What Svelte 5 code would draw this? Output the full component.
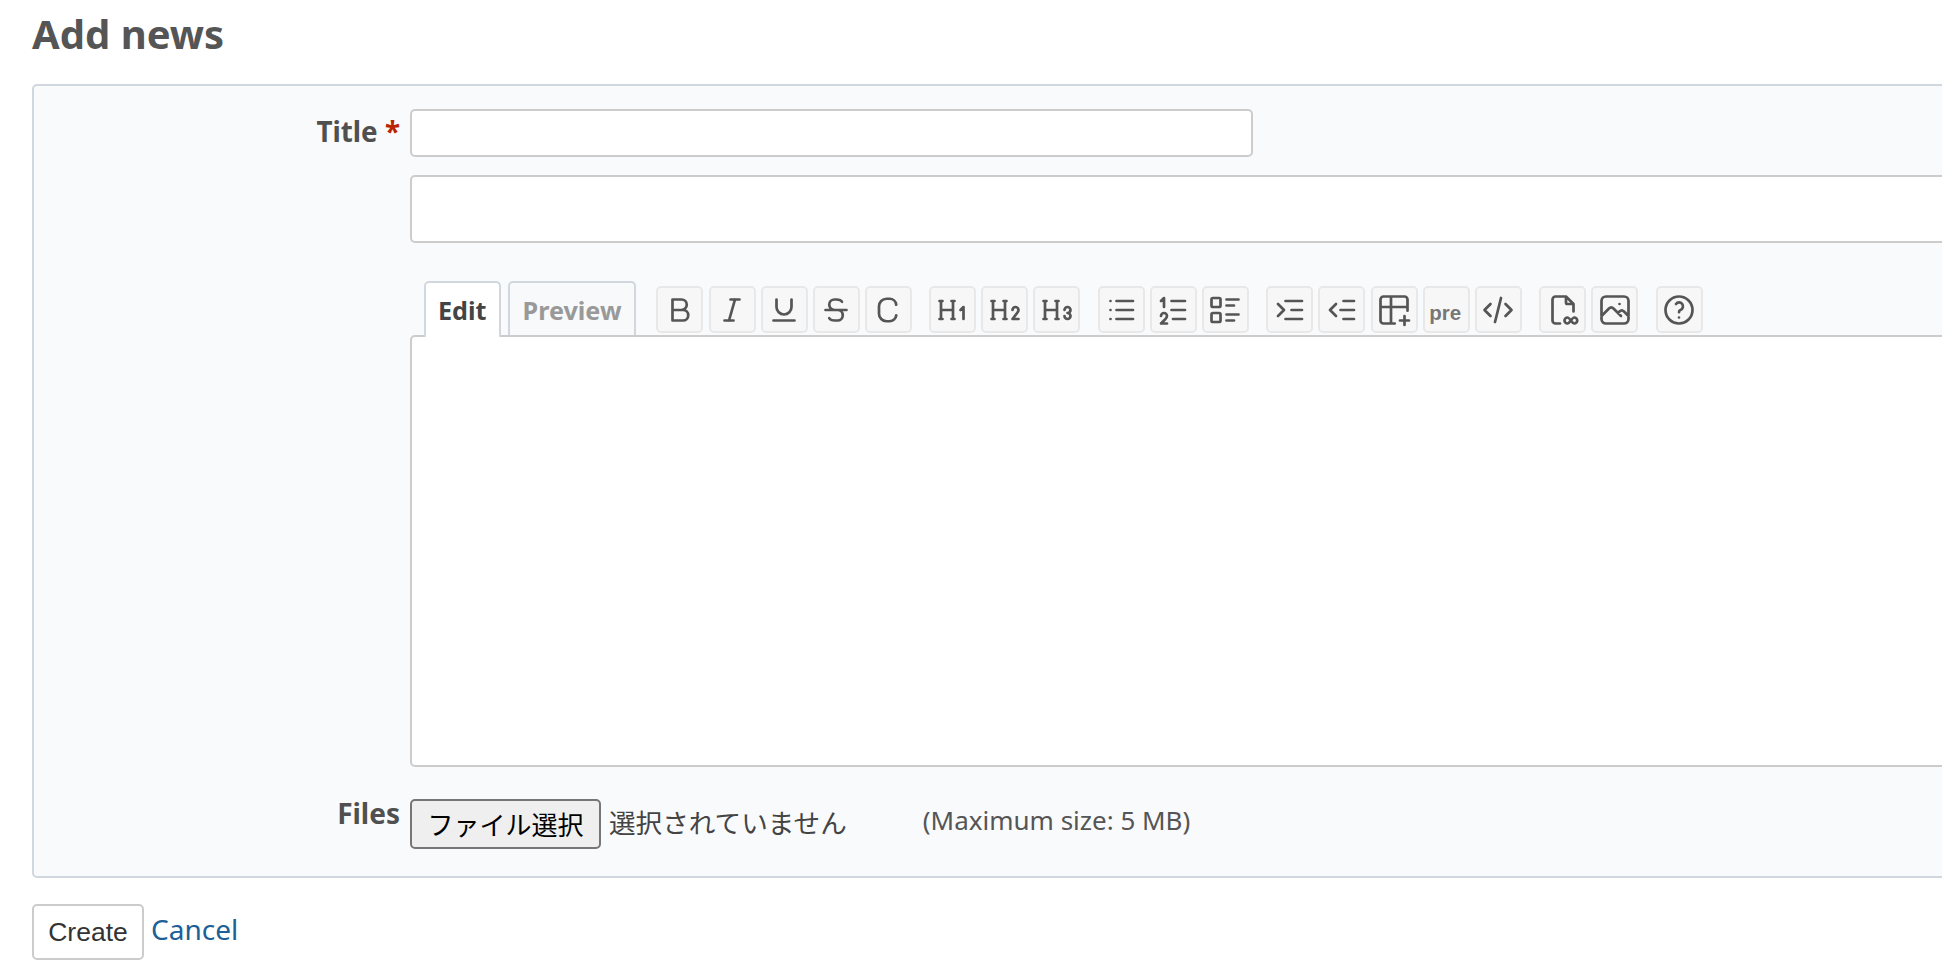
<script lang="ts">
  const groups = [
    [
      { name: "bold", d: "M7 5h6a3.5 3.5 0 0 1 0 7h-6z M13 12h1a3.5 3.5 0 0 1 0 7h-7v-7" },
      { name: "italic", d: "M11 5h6 M7 19h6 M14 5l-4 14" },
      { name: "underline", d: "M7 5v5a5 5 0 0 0 10 0v-5 M5 19h14" },
      { name: "strike", d: "M5 12h14 M16 6.5a4 2 0 0 0 -4 -1.5h-1a3.5 3.5 0 0 0 0 7h2a3.5 3.5 0 0 1 0 7h-1.5a4 2 0 0 1 -4 -1.5" },
      { name: "code", d: "M17.5 8.5a4.5 4.5 0 0 0 -4.5 -4h-2a5 5 0 0 0 -5 5v5a5 5 0 0 0 5 5h2a4.5 4.5 0 0 0 4.5 -4" },
    ],
    [
      { name: "h1", d: "M4 6v12 M12 6v12 M11 18h2 M3 18h2 M4 12h8 M3 6h2 M11 6h2 M19 18v-8l-2 2" },
      { name: "h2", d: "M4 6v12 M12 6v12 M11 18h2 M3 18h2 M4 12h8 M3 6h2 M11 6h2 M17 12a2 2 0 1 1 4 0c0 .591 -.417 1.318 -.816 1.858l-3.184 4.143h4" },
      { name: "h3", d: "M4 6v12 M12 6v12 M11 18h2 M3 18h2 M4 12h8 M3 6h2 M11 6h2 M19 14a2 2 0 1 0 -2 -2 M17 16a2 2 0 1 0 2 -2" },
    ],
    [
      { name: "ul", d: "M9 6h11 M9 12h11 M9 18h11 M5 6v.01 M5 12v.01 M5 18v.01" },
      { name: "ol", d: "M11 6h9 M11 12h9 M12 18h8 M4 16a2 2 0 1 1 4 0c0 .591 -.601 1.46 -1 2l-3 3h4 M6 10v-6l-2 2" },
      { name: "tl", d: "M13 5h8 M13 9h5 M13 15h8 M13 19h5 M4 4h4a1 1 0 0 1 1 1v4a1 1 0 0 1 -1 1h-4a1 1 0 0 1 -1 -1v-4a1 1 0 0 1 1 -1z M4 14h4a1 1 0 0 1 1 1v4a1 1 0 0 1 -1 1h-4a1 1 0 0 1 -1 -1v-4a1 1 0 0 1 1 -1z" },
    ],
    [
      { name: "bq", d: "M20 6h-11 M20 12h-7 M20 18h-11 M4 8l4 4l-4 4" },
      { name: "unbq", d: "M20 6h-7 M20 12h-9 M20 18h-7 M8 8l-4 4l4 4" },
      { name: "table", d: "M12.5 21h-7.5a2 2 0 0 1 -2 -2v-14a2 2 0 0 1 2 -2h14a2 2 0 0 1 2 2v7.5 M3 10h18 M10 3v18 M16 19h6 M19 16v6" },
      { name: "pre", text: "pre" },
      { name: "inline", d: "M7 8l-4 4l4 4 M17 8l4 4l-4 4 M14 4l-4 16" },
    ],
    [
      { name: "attach", d: "M14 3v4a1 1 0 0 0 1 1h4 M19 13v-5l-5 -5h-7a2 2 0 0 0 -2 2v14a2 2 0 0 0 2 2h3 M15 17a2 2 0 1 0 0 4c1.5 0 3 -4 4.5 -4a2 2 0 1 1 0 4c-1.5 0 -3 -4 -4.5 -4z" },
      { name: "img", d: "M15 8h.01 M3 6a3 3 0 0 1 3 -3h12a3 3 0 0 1 3 3v12a3 3 0 0 1 -3 3h-12a3 3 0 0 1 -3 -3z M3 16l5 -5c.928 -.893 2.072 -.893 3 0l5 5 M14 14l1 -1c.928 -.893 2.072 -.893 3 0l3 3" },
    ],
    [
      { name: "help", d: "M3 12a9 9 0 1 0 18 0a9 9 0 1 0 -18 0 M12 17v.01 M12 13.5a1.5 1.5 0 0 1 1 -1.5a2.6 2.6 0 1 0 -3 -4" },
    ],
  ];
</script>

<div class="page">
  <h2>Add news</h2>

  <div class="box">
    <div class="row">
      <label class="lbl" for="title">Title <span class="req">*</span></label>
      <input id="title" class="title" type="text" />
    </div>

    <div class="row summary-row">
      <span class="lbl"></span>
      <textarea class="summary"></textarea>
    </div>

    <div class="row editor-row">
      <span class="lbl"></span>
      <div class="editor">
        <div class="tabbar">
          <div class="tabs">
            <span class="tab active">Edit</span>
            <span class="tab">Preview</span>
          </div>
          <div class="toolbar">
            {#each groups as group}
              <div class="group">
                {#each group as btn}
                  <button class="tool" type="button" aria-label={btn.name}>
                    {#if btn.text}
                      <span class="pre">{btn.text}</span>
                    {:else}
                      <svg viewBox="0 0 24 24" width="36" height="36"><path d={btn.d} /></svg>
                    {/if}
                  </button>
                {/each}
              </div>
            {/each}
          </div>
        </div>
        <textarea class="content"></textarea>
      </div>
    </div>

    <div class="row files-row">
      <span class="lbl files">Files</span>
      <div class="file">
        <button class="picker" type="button">ファイル選択</button>
        <span class="none">選択されていません</span>
        <span class="max">(Maximum size: 5 MB)</span>
      </div>
    </div>
  </div>

  <div class="actions">
    <button class="create" type="button">Create</button>
    <a href="#cancel" class="cancel">Cancel</a>
  </div>
</div>

<style>
  :global(body) {
    background: #fff;
    overflow: hidden;
  }

  .page {
    width: 1942px;
    height: 968px;
    overflow: hidden;
    padding-left: 32px;
    box-sizing: border-box;
    font-family: "Noto Sans", sans-serif;
    color: #555;
  }

  h2 {
    margin: 0;
    padding-top: 10px;
    height: 84px;
    box-sizing: border-box;
    font-size: 40px;
    line-height: 48px;
    font-weight: 700;
    color: #555;
  }

  .box {
    width: 2200px;
    height: 794px;
    box-sizing: border-box;
    background: #f9fafb;
    border: 2px solid #d0d7de;
    border-radius: 5px;
    padding-top: 23px;
  }

  .row {
    display: flex;
    align-items: flex-start;
  }

  .lbl {
    flex: none;
    width: 376px;
    padding-right: 10px;
    box-sizing: border-box;
    text-align: right;
    font-size: 27.8px;
    font-weight: 700;
    line-height: 44px;
    color: #505050;
  }

  .req {
    color: #bb2200;
  }

  input,
  textarea {
    display: block;
    margin: 0;
    padding: 0;
    box-sizing: border-box;
    background: #fff;
    border: 2px solid #ccc;
    border-radius: 5px;
    resize: none;
    outline: none;
  }

  .title {
    width: 843px;
    height: 48px;
  }

  .summary-row {
    margin-top: 18px;
  }

  .summary {
    width: 1700px;
    height: 68px;
  }

  .editor-row {
    margin-top: 38px;
  }

  .editor {
    width: 1700px;
  }

  .tabbar {
    display: flex;
    align-items: flex-end;
    height: 56px;
    margin-bottom: -2px;
    position: relative;
  }

  .tabs {
    display: flex;
    gap: 7px;
    margin-left: 14px;
  }

  .tab {
    height: 54px;
    box-sizing: border-box;
    padding: 0 13px;
    background: #f8f9fa;
    border: 2px solid #d0d7de;
    border-bottom: 0;
    border-radius: 5px 5px 0 0;
    font-size: 25.2px;
    font-weight: 700;
    line-height: 54px;
    color: #999;
    position: relative;
  }

  .tab.active {
    padding: 0 12px;
    background: #fff;
    color: #444;
    height: 56px;
    z-index: 1;
  }

  .toolbar {
    display: flex;
    gap: 17.4px;
    margin-left: 20px;
    margin-bottom: 4px;
  }

  .group {
    display: flex;
    gap: 5.1px;
  }

  .tool {
    width: 47px;
    height: 47px;
    padding: 0;
    display: flex;
    align-items: center;
    justify-content: center;
    background: #f7f7f7;
    border: 2px solid #e8e8e8;
    border-radius: 5px;
  }

  .tool svg {
    fill: none;
    stroke: #555;
    stroke-width: 1.8;
    stroke-linecap: round;
    stroke-linejoin: round;
  }

  .pre {
    font-family: "Liberation Sans", sans-serif;
    font-size: 20.5px;
    font-weight: 700;
    color: #777;
    margin: 7px 0 0 -2px;
  }

  .content {
    width: 100%;
    height: 432px;
  }

  .files-row {
    margin-top: 32px;
  }

  .files {
    line-height: 29px;
    font-size: 28px;
  }

  .file {
    display: flex;
    align-items: center;
  }

  .picker {
    width: 191px;
    height: 50px;
    padding: 0 0 2px;
    background: #efefef;
    border: 2px solid #767676;
    border-radius: 5px;
    font-family: "Noto Sans CJK JP", sans-serif;
    font-size: 26px;
    color: #000;
  }

  .none {
    margin: 0 0 5px 8px;
    font-family: "Noto Sans CJK JP", sans-serif;
    font-size: 26.6px;
    color: #444;
  }

  .max {
    margin: 0 0 8px 76px;
    font-size: 26px;
    color: #555;
  }

  .actions {
    display: flex;
    align-items: flex-start;
    margin-top: 26px;
  }

  .create {
    width: 112px;
    height: 56px;
    padding: 0;
    background: #fff;
    border: 2px solid #ccc;
    border-radius: 5px;
    font-family: "Liberation Sans", sans-serif;
    font-size: 26.5px;
    color: #333;
  }

  .cancel {
    margin-left: 7px;
    font-size: 28px;
    line-height: 50px;
    color: #1d5f97;
    text-decoration: none;
  }
</style>
